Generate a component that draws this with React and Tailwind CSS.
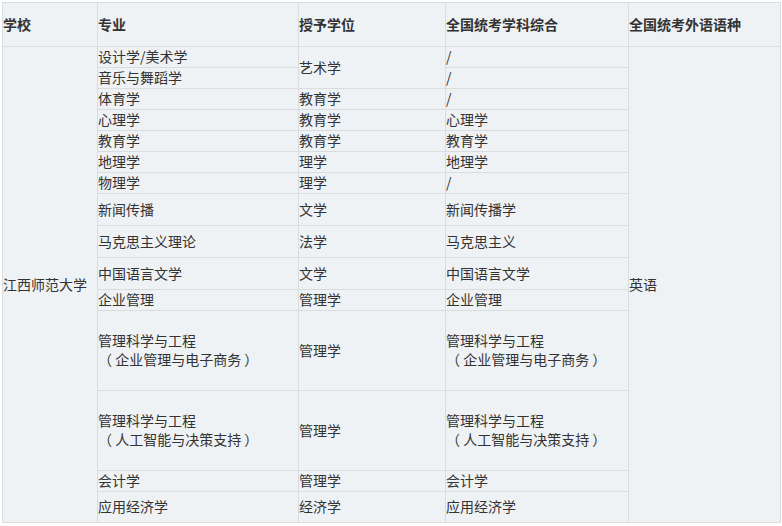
import React from 'react';

const rows = [
  { h: 'h-[21px]', major: '设计学/美术学', degree: '艺术学', degreeSpan: 2, exam: '/' },
  { h: 'h-[21px]', major: '音乐与舞蹈学', degree: null, exam: '/' },
  { h: 'h-[21px]', major: '体育学', degree: '教育学', exam: '/' },
  { h: 'h-[21px]', major: '心理学', degree: '教育学', exam: '心理学' },
  { h: 'h-[21px]', major: '教育学', degree: '教育学', exam: '教育学' },
  { h: 'h-[21px]', major: '地理学', degree: '理学', exam: '地理学' },
  { h: 'h-[21px]', major: '物理学', degree: '理学', exam: '/' },
  { h: 'h-[32px]', major: '新闻传播', degree: '文学', exam: '新闻传播学' },
  { h: 'h-[32px]', major: '马克思主义理论', degree: '法学', exam: '马克思主义' },
  { h: 'h-[32px]', major: '中国语言文学', degree: '文学', exam: '中国语言文学' },
  { h: 'h-[21px]', major: '企业管理', degree: '管理学', exam: '企业管理' },
  {
    h: 'h-[80px]',
    major: ['管理科学与工程', '（ 企业管理与电子商务 ）'],
    degree: '管理学',
    exam: ['管理科学与工程', '（ 企业管理与电子商务 ）'],
  },
  {
    h: 'h-[80px]',
    major: ['管理科学与工程', '（ 人工智能与决策支持 ）'],
    degree: '管理学',
    exam: ['管理科学与工程', '（ 人工智能与决策支持 ）'],
  },
  { h: 'h-[21px]', major: '会计学', degree: '管理学', exam: '会计学' },
  { h: 'h-[31px]', major: '应用经济学', degree: '经济学', exam: '应用经济学' },
];

const cell = 'border border-[#dadcde] px-0 pt-0 pb-[1px] align-middle text-left';

const Lines = ({ v }) =>
  Array.isArray(v) ? v.map((t, i) => <div key={i}>{t}</div>) : v;

export default function App() {
  return (
    <div
      className="bg-white w-[782px] h-[526px] pt-[2px] pl-[2px]"
      style={{ fontFamily: '"Noto Sans CJK SC", "Noto Sans", sans-serif' }}
    >
      <table className="table-fixed border-collapse w-[778px] bg-[#eff2f5] text-[#333] text-[14px] leading-[19px]">
        <colgroup>
          <col className="w-[95px]" />
          <col className="w-[201px]" />
          <col className="w-[147px]" />
          <col className="w-[183px]" />
          <col className="w-[152px]" />
        </colgroup>
        <thead>
          <tr className="h-[44px] font-bold">
            <th className={cell}>学校</th>
            <th className={cell}>专业</th>
            <th className={cell}>授予学位</th>
            <th className={cell}>全国统考学科综合</th>
            <th className={cell}>全国统考外语语种</th>
          </tr>
        </thead>
        <tbody>
          {rows.map((r, i) => (
            <tr key={i} className={r.h}>
              {i === 0 && (
                <td rowSpan={rows.length} className={cell}>
                  江西师范大学
                </td>
              )}
              <td className={cell}>
                <Lines v={r.major} />
              </td>
              {r.degree && (
                <td rowSpan={r.degreeSpan || 1} className={cell}>
                  {r.degree}
                </td>
              )}
              <td className={cell}>
                <Lines v={r.exam} />
              </td>
              {i === 0 && (
                <td rowSpan={rows.length} className={cell}>
                  英语
                </td>
              )}
            </tr>
          ))}
        </tbody>
      </table>
    </div>
  );
}
